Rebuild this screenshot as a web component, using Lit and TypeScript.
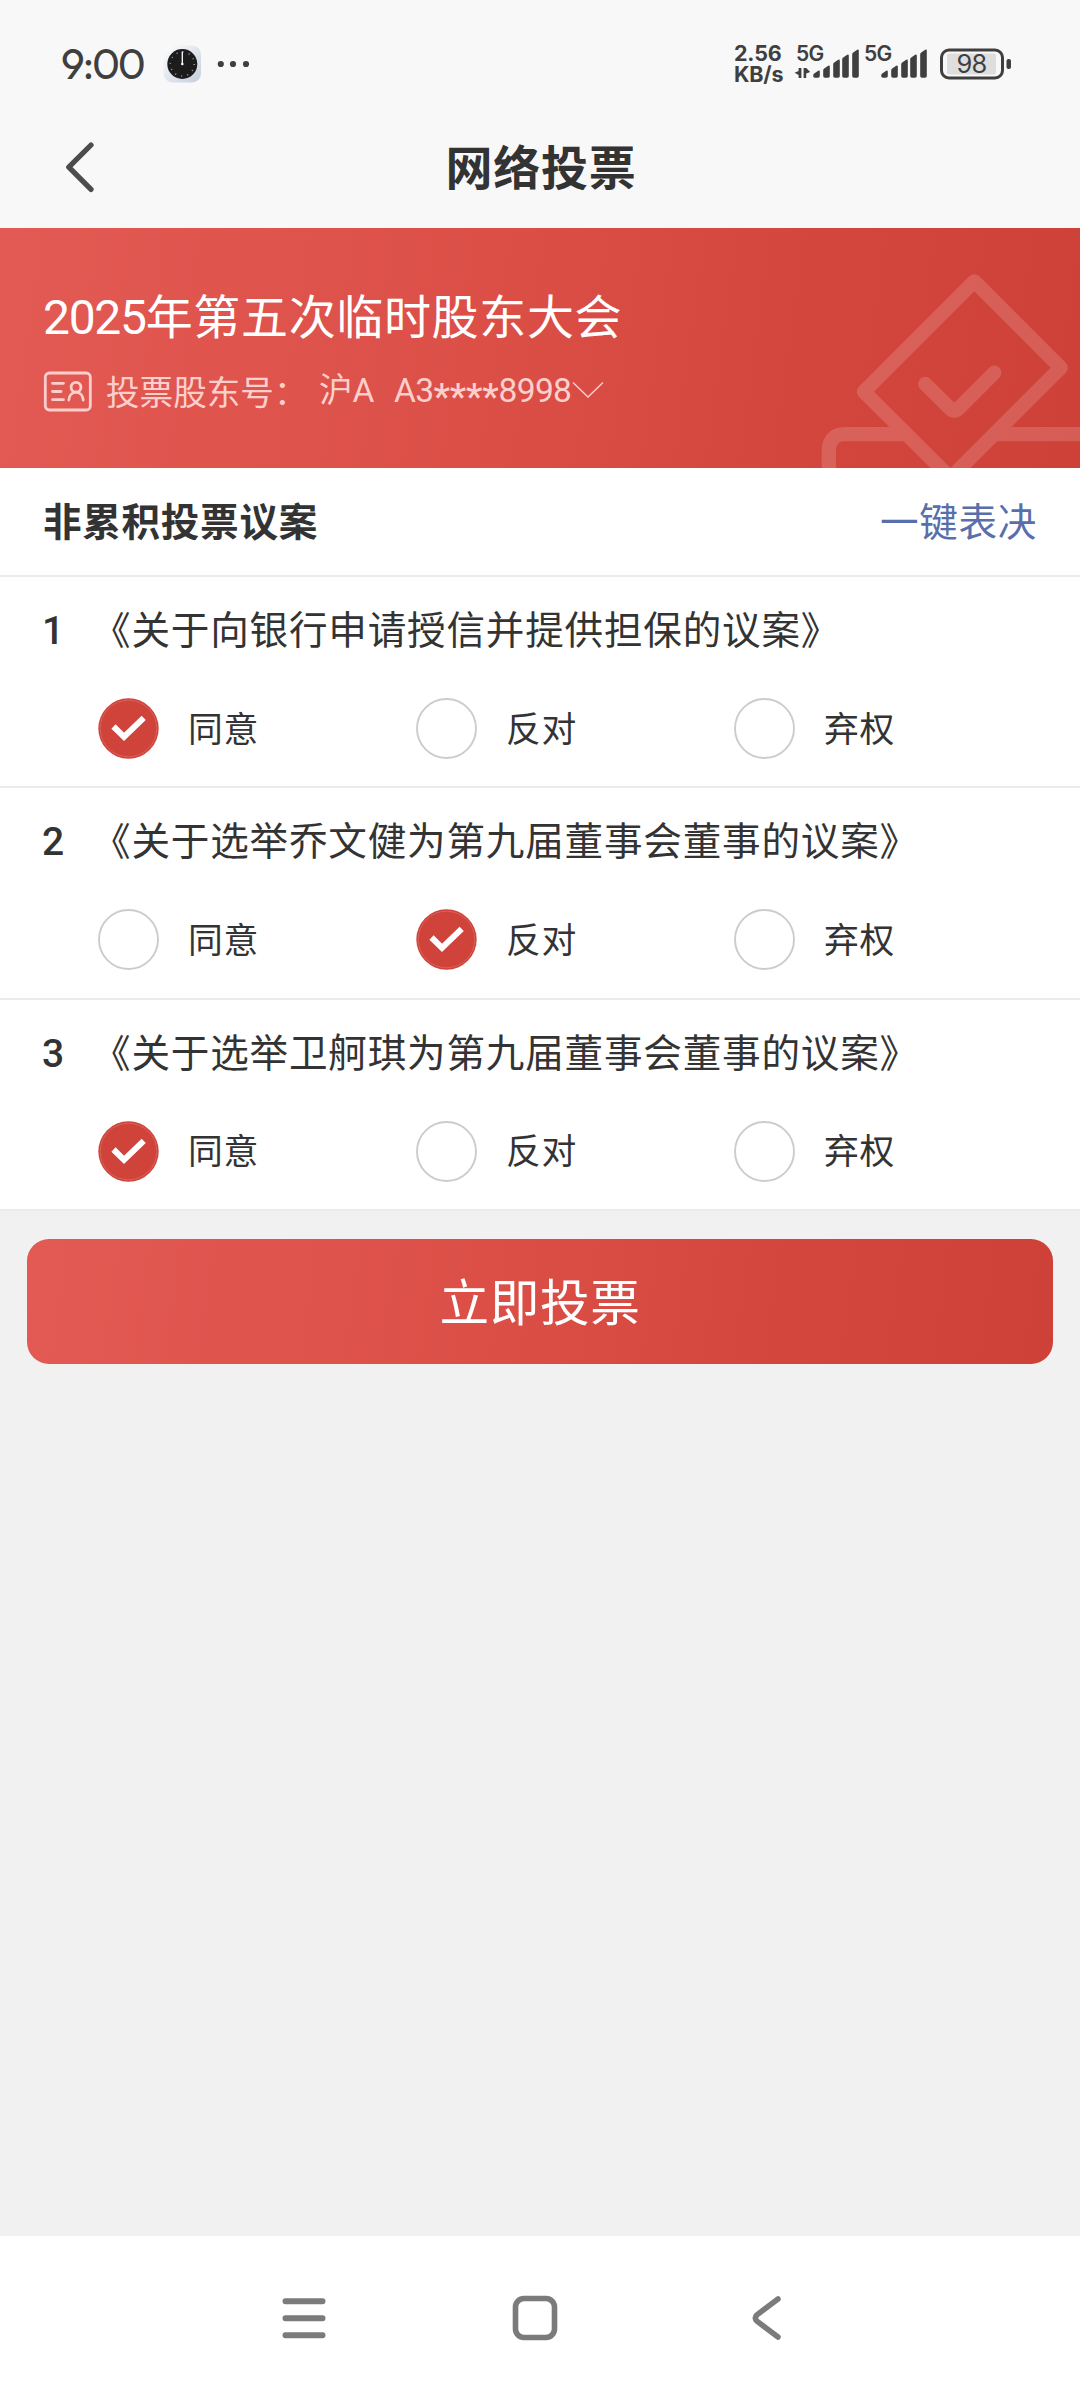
import { LitElement, html, css, svg } from "lit";
import { customElement, property, state } from "lit/decorators.js";

interface Proposal {
  title: string;
  choice: number;
}

const CHOICES = ["同意", "反对", "弃权"];

@customElement("status-bar")
class StatusBar extends LitElement {
  static styles = css`
    :host {
      display: flex;
      height: 128px;
      box-sizing: border-box;
      padding: 0 68px 0 61px;
      justify-content: space-between;
      align-items: center;
      color: #3f3f3f;
      font-family: Inter, "Liberation Sans", sans-serif;
    }
    .left,
    .right {
      display: flex;
      align-items: center;
    }
    .time {
      width: 102px;
      font: 450 42px/50px Outfit, Lato, sans-serif;
      letter-spacing: -1.9px;
      white-space: nowrap;
    }
    .speed {
      display: flex;
      flex-direction: column;
      width: 60px;
      margin-top: -1px;
      font-weight: 700;
      font-size: 21.5px;
      line-height: 21px;
      letter-spacing: -0.2px;
      white-space: nowrap;
    }
    .cell {
      position: relative;
      width: 68px;
      height: 34px;
    }
    .net {
      position: absolute;
      left: 2px;
      top: -3px;
      font-weight: 600;
      font-size: 21px;
      line-height: 20px;
      letter-spacing: -0.6px;
    }
    .battery {
      position: relative;
      width: 72px;
      height: 34px;
      margin-left: 10px;
    }
    .level {
      position: absolute;
      left: 0;
      width: 63px;
      top: 1px;
      text-align: center;
      font-weight: 400;
      font-size: 25.5px;
      line-height: 32px;
      letter-spacing: -0.8px;
    }
    svg {
      display: block;
    }
  `;

  private bars() {
    return [
      [19, 22],
      [29, 17],
      [39, 11],
      [48, 6],
      [58, 1],
    ].map(
      ([x, y]) =>
        svg`<path d="M${x + 1.2} ${y + 3}l4-2.6q1.6-.8 1.6 1V27.600q0 1.800-1.800 1.800h-3q-1.800 0-1.800-1.800V${y + 5}q0-1.300 1-2z" fill="#3f3f3f"/>`
    );
  }

  private cell(arrows: boolean) {
    return html`<div class="cell">
      <span class="net">5G</span>
      <svg width="68" height="34" viewBox="0 0 68 34">
        <g transform="translate(0 1.400)">
          ${this.bars()}
          ${arrows
            ? svg`<path d="M7.400 19.500V29.500H4.600V26.500L.6 24.300 4.600 22.500V19.500zM9.600 29.500V19.500H12.200L16.200 23.600 12.200 25V29.500z" fill="#3f3f3f"/>`
            : ""}
        </g>
      </svg>
    </div>`;
  }

  render() {
    return html`
      <div class="left">
        <span class="time">9:00</span>
        <svg width="90" height="38" viewBox="0 0 90 38">
          <defs>
            <linearGradient id="tile" x1="0" y1="0" x2="1" y2="1">
              <stop offset="0" stop-color="#fff" />
              <stop offset="1" stop-color="#c3cddc" />
            </linearGradient>
          </defs>
          <rect x=".5" y=".5" width="37.500" height="37" rx="9" fill="url(#tile)" />
          <circle cx="19.300" cy="19" r="15" fill="#1c1c1c" />
          <circle cx="19.300" cy="19" r="12" fill="none" stroke="#999" stroke-width="1.600" stroke-dasharray="1 5.283" />
          <path d="M19.300 18V6.500" stroke="#fff" stroke-width="1.300" />
          <circle cx="19.300" cy="19" r="1.300" fill="#fff" />
          <g fill="#3f3f3f">
            <circle cx="57.800" cy="19" r="3.100" />
            <circle cx="70" cy="19" r="3.100" />
            <circle cx="83" cy="19" r="3.100" />
          </g>
        </svg>
      </div>
      <div class="right">
        <div class="speed"><span>2.56</span><span>KB/s</span></div>
        ${this.cell(true)} ${this.cell(false)}
        <div class="battery">
          <svg width="72" height="34" viewBox="0 0 72 34">
            <rect x="1.500" y="3" width="61" height="28" rx="7.500" fill="none" stroke="#3f3f3f" stroke-width="3" />
            <rect x="7" y="6.500" width="49" height="21" rx="2" fill="#dedede" />
            <rect x="66.500" y="12" width="4.500" height="10" rx="2" fill="#3f3f3f" />
          </svg>
          <span class="level">98</span>
        </div>
      </div>
    `;
  }
}

@customElement("vote-option")
class VoteOption extends LitElement {
  @property({ type: Boolean }) checked = false;
  @property() label = "";

  static styles = css`
    :host {
      display: flex;
      align-items: center;
      width: 318px;
    }
    svg {
      display: block;
      margin-right: 29px;
    }
    .label {
      font-size: 34.8px;
      line-height: 50px;
      letter-spacing: 0.6px;
      margin-bottom: 4px;
    }
  `;

  render() {
    return html`
      <svg width="61" height="61" viewBox="0 0 61 61">
        ${this.checked
          ? svg`<circle cx="30.500" cy="30.500" r="30.200" fill="#cf433b"/>
              <circle cx="30.500" cy="30.500" r="28.300" fill="none" stroke="#dc6d67" stroke-width=".7"/>
              <path d="M15.500 28.500L26 38.800 45.700 19.800" fill="none" stroke="#fff" stroke-width="6"/>`
          : svg`<circle cx="30.500" cy="30.500" r="29.500" fill="#fff" stroke="#ccc" stroke-width="1.900"/>`}
      </svg>
      <span class="label">${this.label}</span>
    `;
  }
}

@customElement("app-root")
class AppRoot extends LitElement {
  @state() private proposals: Proposal[] = [
    { title: "《关于向银行申请授信并提供担保的议案》", choice: 0 },
    { title: "《关于选举乔文健为第九届董事会董事的议案》", choice: 1 },
    { title: "《关于选举卫舸琪为第九届董事会董事的议案》", choice: 0 },
  ];

  static styles = css`
    :host {
      display: flex;
      flex-direction: column;
      width: 1080px;
      height: 2400px;
      overflow: hidden;
      background: #f1f1f1;
      color: #333;
      font-family: "Noto Sans CJK SC", sans-serif;
      white-space: nowrap;
    }
    svg {
      display: block;
    }
    .top {
      background: #f8f8f8;
      height: 228px;
      flex: none;
    }
    .titlebar {
      display: grid;
      grid-template-columns: 100px 1fr 100px;
      align-items: center;
      height: 76px;
    }
    .titlebar svg {
      margin-left: 64px;
    }
    .page-title {
      text-align: center;
      font-size: 47px;
      line-height: 74px;
      letter-spacing: 0.8px;
      padding: 0 0 3px 2px;
      font-weight: 700;
    }
    .banner {
      position: relative;
      flex: none;
      height: 240px;
      box-sizing: border-box;
      padding: 50px 43px 0;
      background: linear-gradient(98deg, #e35a54, #db4f47 45%, #d3463e 75%, #ce4138);
      color: #fff;
    }
    .art {
      position: absolute;
      right: 0;
      top: 0;
    }
    .meeting {
      height: 72px;
      font-size: 47px;
      line-height: 72px;
      letter-spacing: 0.65px;
    }
    .meeting .year {
      font-family: Roboto, sans-serif;
      font-size: 48px;
      font-weight: 450;
      letter-spacing: -1.3px;
    }
    .account {
      display: flex;
      align-items: center;
      height: 50px;
      margin-top: 16px;
      font-family: Roboto, "Noto Sans CJK SC", sans-serif;
      font-size: 33.6px;
      line-height: 50px;
      color: #fccfcd;
    }
    .account .caption {
      margin-left: 14px;
      width: 213px;
      height: 50px;
      font-family: "Noto Sans CJK SC", sans-serif;
    }
    .account .market {
      width: 75px;
      height: 50px;
    }
    .account .holder {
      display: flex;
      width: 178px;
      height: 50px;
      letter-spacing: -0.7px;
    }
    .account .mask {
      position: relative;
      top: 6px;
      font-size: 37px;
      font-weight: 500;
      letter-spacing: -0.1px;
    }
    .section {
      display: flex;
      flex: none;
      align-items: center;
      justify-content: space-between;
      box-sizing: border-box;
      height: 109px;
      padding: 0 43px 6px;
      background: #fff;
      font-size: 38.6px;
      letter-spacing: 0.7px;
      border-bottom: 2px solid #ebebeb;
    }
    .section b {
      font-weight: 700;
    }
    .link {
      color: #596fac;
    }
    .item {
      flex: none;
      box-sizing: border-box;
      height: 211.33px;
      padding-top: 22px;
      background: #fff;
      border-bottom: 2px solid #ebebeb;
    }
    .question {
      display: flex;
      height: 56px;
      font-size: 38.6px;
      letter-spacing: 0.8px;
      line-height: 56px;
    }
    .number {
      width: 50px;
      padding: 5px 0 0 42px;
      font-family: Roboto, sans-serif;
      font-size: 39px;
      line-height: 54px;
      font-weight: 500;
    }
    .options {
      display: flex;
      padding: 43px 0 0 98px;
    }
    .submit {
      flex: none;
      margin: 28px 27px 0;
      height: 125px;
      border: 0;
      padding: 0 0 4px;
      border-radius: 22px;
      background: linear-gradient(98deg, #e35a54, #db4f47 45%, #d3463e 75%, #ce4138);
      color: #fff;
      font: 400 49.6px/120px "Noto Sans CJK SC", sans-serif;
      letter-spacing: 0.6px;
    }
    .nav {
      flex: none;
      margin-top: auto;
      height: 164px;
      background: #fff;
      display: grid;
      grid-template-columns: 231px 231px 231px;
      justify-content: center;
      align-items: center;
      justify-items: center;
      padding-right: 10px;
    }
  `;

  private choose(index: number, choice: number) {
    this.proposals = this.proposals.map((p, i) => (i === index ? { ...p, choice } : p));
  }

  private approveAll() {
    this.proposals = this.proposals.map((p) => ({ ...p, choice: 0 }));
  }

  render() {
    return html`
      <header class="top">
        <status-bar></status-bar>
        <div class="titlebar">
          <svg width="36" height="54" viewBox="0 0 36 54">
            <path d="M27 5L4.800 27.200 27 49.400" fill="none" stroke="#4c4c4c" stroke-width="5.300" stroke-linecap="round" stroke-linejoin="round" />
          </svg>
          <div class="page-title">网络投票</div>
        </div>
      </header>

      <section class="banner">
        <svg class="art" width="280" height="240" viewBox="800 228 280 240">
          <g opacity=".15" fill="none" stroke="#fff" stroke-width="14.300" stroke-linejoin="round">
            <path d="M974.300 281.300L1060.700 367.700 950.500 477.900 863.900 391.700z" />
            <path d="M925.300 384L950 408.500Q954.300 412.500 958.600 408.500L994.300 372.700" stroke-linecap="round" />
            <path d="M828.800 470V452Q828.800 434.200 845 434.200H906M994 434.200H1084" />
          </g>
        </svg>
        <div class="meeting"><span class="year">2025</span>年第五次临时股东大会</div>
        <div class="account">
          <svg width="49" height="41" viewBox="0 0 49 41">
            <g fill="none" stroke="#fccfcd" stroke-width="2.800" stroke-linecap="round">
              <rect x="2.300" y="2" width="45" height="37" rx="4" />
              <path d="M9.500 12.300H20.500M9.500 20.500H18M9.500 28.700H20.500" />
              <ellipse cx="33" cy="16.300" rx="4.900" ry="4.900" />
              <path d="M25.800 29C26.200 24.500 29 21.200 33 21.200S39.800 24.500 40.300 29" />
            </g>
          </svg>
          <span class="caption">投票股东号：</span>
          <span class="market">沪A</span>
          <span class="holder"><span>A3</span><span class="mask">****</span><span>8998</span></span>
          <svg width="32" height="18" viewBox="0 0 32 18">
            <path d="M1 .5L16 15 31 .5" fill="none" stroke="#fccfcd" stroke-width="1.400" />
          </svg>
        </div>
      </section>

      <div class="section">
        <b>非累积投票议案</b>
        <span class="link" @click=${this.approveAll}>一键表决</span>
      </div>

      ${this.proposals.map(
        (p, i) => html`<div class="item">
          <div class="question">
            <span class="number">${i + 1}</span><span>${p.title}</span>
          </div>
          <div class="options">
            ${CHOICES.map(
              (label, c) => html`<vote-option
                .label=${label}
                .checked=${p.choice === c}
                @click=${() => this.choose(i, c)}
              ></vote-option>`
            )}
          </div>
        </div>`
      )}

      <button class="submit">立即投票</button>

      <nav class="nav">
        <svg width="44" height="44" viewBox="0 0 44 44">
          <path d="M3.500 5.300H40.500M3.500 22.300H40.500M3.500 39.300H40.500" stroke="#7b7b7b" stroke-width="6" stroke-linecap="round" />
        </svg>
        <svg width="46" height="46" viewBox="0 0 46 46">
          <rect x="3.500" y="3.500" width="39" height="39" rx="8.500" fill="none" stroke="#7b7b7b" stroke-width="5.600" />
        </svg>
        <svg width="30" height="46" viewBox="0 0 30 46">
          <path d="M27 4L6 19.800Q2.800 23 6 26.200L27 42" fill="none" stroke="#7b7b7b" stroke-width="5.500" stroke-linecap="round" />
        </svg>
      </nav>
    `;
  }
}
